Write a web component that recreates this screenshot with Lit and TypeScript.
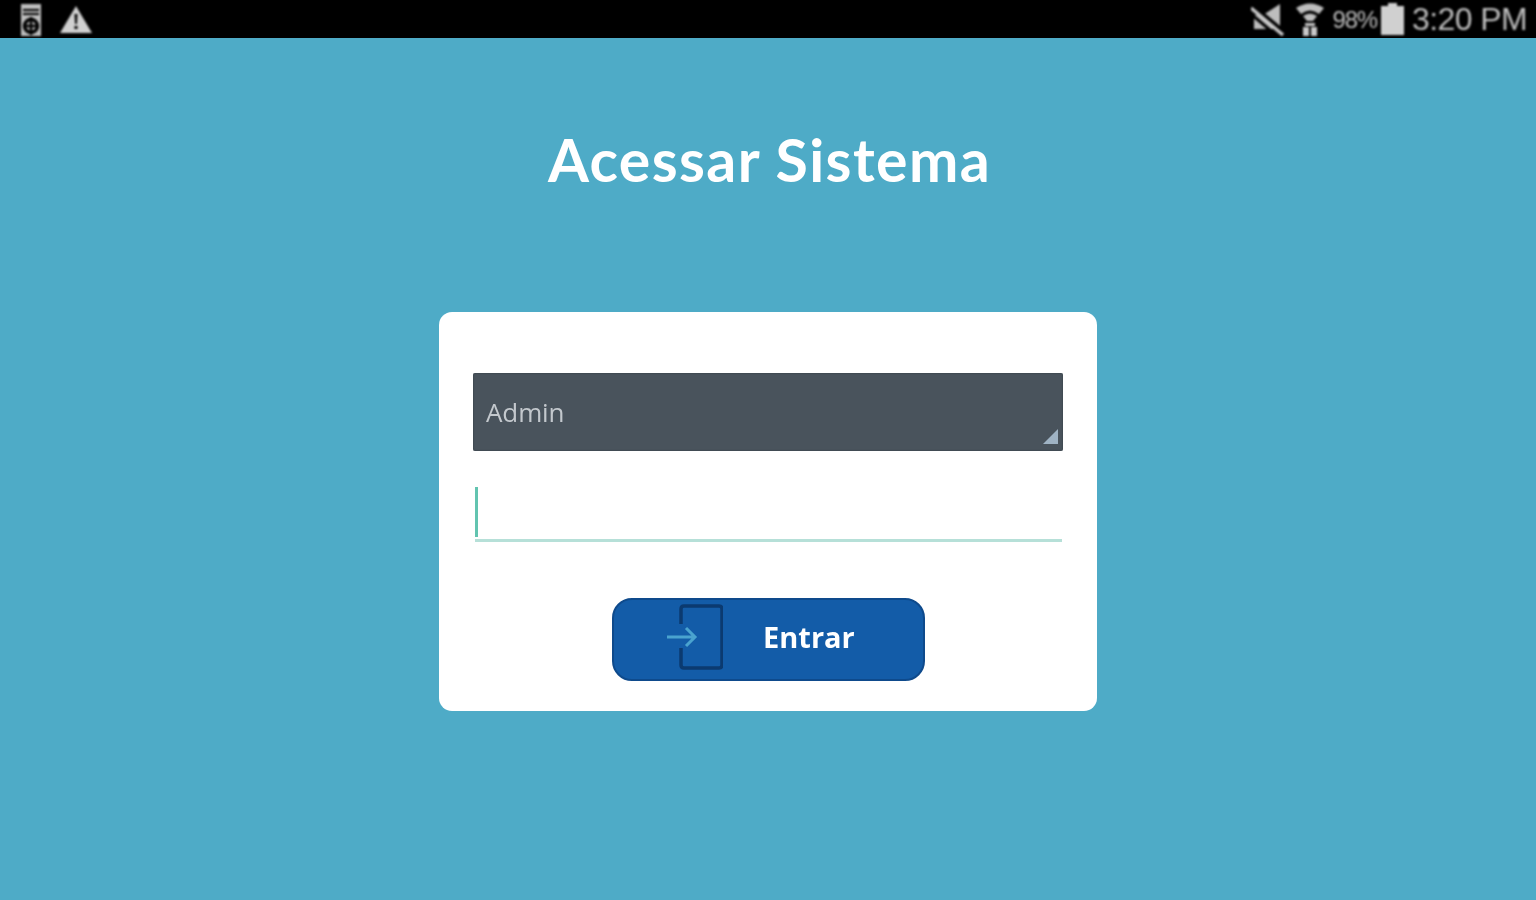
import { LitElement, css, html } from 'lit';
import { customElement } from 'lit/decorators.js';

@customElement('app-root')
export class AppRoot extends LitElement {
  static styles = css`
    :host {
      display: flex;
      flex-direction: column;
      width: 100%;
      height: 900px;
      background: #4eabc7;
      font-family: 'Open Sans', 'Liberation Sans', sans-serif;
      overflow: hidden;
    }

    .status {
      height: 38px;
      flex-shrink: 0;
      background: #000;
      display: flex;
      align-items: center;
      justify-content: space-between;
      padding: 0 9px 0 19px;
      color: #bdbdbd;
      font-family: 'Liberation Sans', sans-serif;
    }

    .status__group {
      display: flex;
      align-items: center;
      filter: blur(1px);
    }

    .status__group--left {
      gap: 16px;
    }

    .status__pct {
      font-size: 24px;
      letter-spacing: -1.2px;
      margin: 2px 4px 0 8px;
    }

    .status__time {
      font-size: 32px;
      letter-spacing: -0.6px;
      margin-left: 8px;
      white-space: nowrap;
    }

    .main {
      display: flex;
      flex-direction: column;
      align-items: center;
    }

    .title {
      margin: 89px 0 0 3px;
      height: 66px;
      line-height: 66px;
      font-family: 'Lato', 'Open Sans', sans-serif;
      font-size: 59px;
      font-weight: 700;
      color: #fff;
      letter-spacing: 1.4px;
      white-space: nowrap;
      filter: blur(0.6px);
    }

    .card {
      margin-top: 119px;
      width: 658px;
      height: 399px;
      box-sizing: border-box;
      padding: 61px 34px 0;
      background: #fff;
      border-radius: 13px;
      display: flex;
      flex-direction: column;
    }

    .select {
      position: relative;
      height: 78px;
      box-sizing: border-box;
      padding-left: 13px;
      display: flex;
      align-items: center;
      background: #49535c;
      border-radius: 2px;
      box-shadow: inset 0 0 2px #30383f;
      color: #c3c8cd;
      font-size: 26px;
      letter-spacing: -0.1px;
      filter: blur(0.7px);
    }

    .select__corner {
      position: absolute;
      right: 5px;
      bottom: 7px;
      width: 15px;
      height: 15px;
    }

    .field {
      position: relative;
      height: 52px;
      margin: 36px 1px 0 2px;
      border-bottom: 3px solid #b6e0d8;
    }

    .field__caret {
      position: absolute;
      left: 0;
      top: 0;
      width: 3px;
      height: 50px;
      background: #62c4b0;
    }

    .button {
      align-self: center;
      margin: 56px 0 0 1px;
      width: 313px;
      height: 83px;
      box-sizing: border-box;
      padding: 0 0 5px 53px;
      display: flex;
      align-items: center;
      gap: 40px;
      background: #135ca8;
      border: 2px solid #0e4a8c;
      border-radius: 20px;
      color: #fff;
      font-family: inherit;
      font-size: 29px;
      font-weight: 700;
      filter: blur(0.7px);
    }

    .button svg {
      flex-shrink: 0;
    }

    .button span {
      margin-bottom: 2px;
    }
  `;

  render() {
    return html`
      <div class="status">
        <div class="status__group status__group--left">
          <svg width="24" height="36" viewBox="0 0 24 36">
            <path fill="#bdbdbd" d="M2 3h20v32H2z" />
            <path fill="#000" d="M4 8h16v2H4zM4 12h16v2H4z" />
            <circle cx="12" cy="25" r="6.5" fill="none" stroke="#000" stroke-width="3.5" />
            <path stroke="#000" stroke-width="2.5" d="M12 16v18M4 25h16" />
          </svg>
          <svg width="34" height="30" viewBox="0 0 34 30">
            <path fill="#d0d0d0" d="M17 2 33 29H1z" />
            <path fill="#000" d="M15.5 10h3l-.6 10h-1.8zM15.5 22h3v3h-3z" />
          </svg>
        </div>
        <div class="status__group">
          <svg width="36" height="34" viewBox="0 0 36 34">
            <path fill="#bdbdbd" d="M3 13h9L29 2v25H3z" />
            <path stroke="#000" stroke-width="5" d="M0 3l36 30" />
            <path stroke="#c8c8c8" stroke-width="3.5" d="M0 6l32 27" />
            <path stroke="#000" stroke-width="3" d="M0 12l26 22" />
          </svg>
          <svg style="margin-left:8px" width="30" height="34" viewBox="0 0 30 34">
            <path fill="#bdbdbd" d="M1 6Q15-3 29 6l-5 6Q15 5 6 12z" />
            <path fill="#bdbdbd" d="M8 14q7-5 14 0l-4 5h-6z" />
            <path fill="#c8c8c8" d="M10 21h10v3h-10zM8 25h6v9H8zM16 25h6v9h-6z" />
          </svg>
          <span class="status__pct">98%</span>
          <svg width="23" height="32" viewBox="0 0 23 32">
            <path fill="#d0d0d0" d="M7 0h9v3h7v29H0V3h7z" />
          </svg>
          <span class="status__time">3:20 PM</span>
        </div>
      </div>
      <div class="main">
        <h1 class="title">Acessar Sistema</h1>
        <div class="card">
          <div class="select">
            Admin
            <svg class="select__corner" viewBox="0 0 15 15">
              <path fill="#9fb3c4" d="M15 0v15H0z" />
            </svg>
          </div>
          <div class="field"><span class="field__caret"></span></div>
          <div class="button">
            <svg width="56" height="66" viewBox="0 0 56 66">
              <path fill="none" stroke="#0b3a70" stroke-width="3.5" stroke-linejoin="round"
                d="M14 20V5q0-3 3-3h35q3 0 3 3v56q0 3-3 3H17q-3 0-3-3V44" />
              <path fill="none" stroke="#4aa3cf" stroke-width="3" d="M0 33h28M19 24l9 9-9 9" />
            </svg>
            <span>Entrar</span>
          </div>
        </div>
      </div>
    `;
  }
}
